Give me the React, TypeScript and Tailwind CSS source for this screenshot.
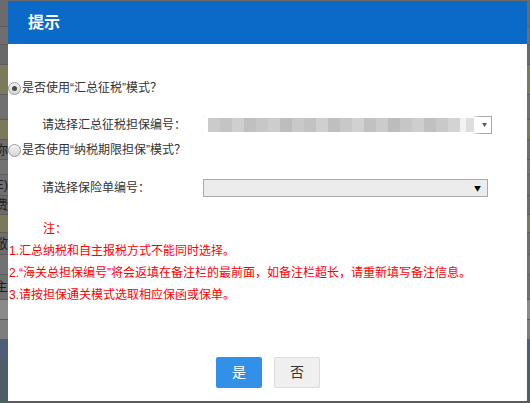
import React from "react";

const bgRows = [
  { h: 27, c: "bg-[#6b6b6b]", t: "" },
  { h: 18, c: "bg-[#6e6e6e]", t: "" },
  { h: 20, c: "bg-[#696969]", t: "" },
  { h: 30, c: "bg-[#7b7b5c]", t: "" },
  { h: 25, c: "bg-[#707070]", t: "" },
  { h: 20, c: "bg-[#7a7a5a]", t: "" },
  { h: 20, c: "bg-[#6d6d6d]", t: "你" },
  { h: 15, c: "bg-[#737373]", t: "" },
  { h: 21, c: "bg-[#6f6f6f]", t: "E)" },
  { h: 19, c: "bg-[#6c6c6c]", t: "费" },
  { h: 18, c: "bg-[#7a7a5b]", t: "" },
  { h: 22, c: "bg-[#6e6e6e]", t: "敞" },
  { h: 20, c: "bg-[#727272]", t: "" },
  { h: 25, c: "bg-[#6f6f6f]", t: "主" },
  { h: 20, c: "bg-[#8a8a8a]", t: "" },
  { h: 20, c: "bg-[#7d7d7d]", t: "" },
  { h: 20, c: "bg-[#4d5f78]", t: "" },
  { h: 43, c: "bg-[#4a6066]", t: "" },
];

const mosaic = [
  "#cbcbcb", "#c4c4c4", "#cfcfcf", "#c0c0c0", "#c7c7c7", "#cdcdcd", "#bdbdbd",
  "#c9c9c9", "#c2c2c2", "#cfcfcf", "#bfbfbf", "#c8c8c8", "#d1d1d1", "#c1c1c1",
  "#cbcbcb", "#bcbcbc", "#c6c6c6", "#cecece", "#c0c0c0", "#c9c9c9", "#d3d3d3",
];

function Radio({ checked }: { checked?: boolean }) {
  return (
    <span className="w-[13px] h-[13px] rounded-full border border-[#9a9a9a] bg-gradient-to-b from-[#f4f4f4] to-[#d6d6d6] flex items-center justify-center shrink-0">
      {checked && <span className="w-[5px] h-[5px] rounded-full bg-[#4a4a4a]" />}
    </span>
  );
}

export default function App() {
  const notes = [
    "1.汇总纳税和自主报税方式不能同时选择。",
    "2.“海关总担保编号”将会返填在备注栏的最前面，如备注栏超长，请重新填写备注信息。",
    "3.请按担保通关模式选取相应保函或保单。",
  ];

  return (
    <div
      className="relative w-[530px] h-[403px] overflow-hidden bg-[#6b6b6b]"
      style={{ fontFamily: '"Liberation Sans", "Noto Sans CJK SC", sans-serif' }}
    >
      {/* page behind the mask */}
      <div className="flex flex-col">
        {bgRows.map((r, i) => (
          <div
            key={i}
            className={`${r.c} border-b border-[#5c5c5c] flex items-center`}
            style={{ height: r.h }}
          >
            <div className="w-[8px] overflow-hidden flex justify-end">
              <span className="whitespace-nowrap text-[13px] text-[#1e1e1e]">{r.t}</span>
            </div>
          </div>
        ))}
      </div>

      {/* dialog */}
      <div className="absolute left-[8px] top-[1px] w-[519px] h-[400px] bg-white flex flex-col">
        <div className="h-[43px] bg-[#0b6ac8] flex items-center pl-[20px]">
          <span className="text-white text-[16px] font-bold">提示</span>
        </div>

        <div className="flex-1 flex flex-col text-[12px] text-[#333]">
          <div className="mt-[34px] h-[20px] flex items-center gap-[1px]">
            <Radio checked />
            <span>是否使用“汇总征税”模式？</span>
          </div>

          <div className="mt-[18px] h-[18px] flex items-center">
            <span className="pl-[34px] w-[194px]">请选择汇总征税担保编号：</span>
            <div className="relative w-[290px] h-[18px] border border-[#a9a9a9] bg-white">
              <span className="absolute right-[4px] top-[3px] text-[5px] text-[#555] font-['Noto_Sans_CJK_SC']">▼</span>
              <div className="absolute left-[-6px] top-[-7px] w-[282px] h-[30px] rounded-full bg-white blur-[2px]" />
              <div className="absolute left-[5px] top-[1px] h-[14px] flex blur-[0.6px]">
                {mosaic.map((c, i) => (
                  <div key={i} className="w-[12px] h-[14px]" style={{ backgroundColor: c }} />
                ))}
                <div className="w-[6px] h-[14px] bg-[#f2f2f2]" />
                <div className="w-[8px] h-[14px] bg-[#dedede]" />
              </div>
            </div>
          </div>

          <div className="mt-[6px] h-[20px] flex items-center gap-[1px]">
            <Radio />
            <span>是否使用“纳税期限担保”模式？</span>
          </div>

          <div className="mt-[19px] h-[18px] flex items-center">
            <span className="pl-[34px] w-[195px]">请选择保险单编号：</span>
            <div className="w-[285px] h-[18px] border border-[#a9a9a9] bg-[#ececec] flex items-center justify-end pr-[6px]">
              <span className="text-[7px] text-black font-['Noto_Sans_CJK_SC']">▼</span>
            </div>
          </div>

          <div className="mt-[22px] h-[20px] flex items-center pl-[35px] text-[#ff0000]">注：</div>

          <div className="mt-[1px] flex flex-col text-[#ff0000] pl-[1px]">
            {notes.map((n) => (
              <div key={n} className="h-[22px] flex items-center whitespace-nowrap">
                {n}
              </div>
            ))}
          </div>

          <div className="mt-auto mb-[13px] flex justify-center gap-[12px] pl-[1px]">
            <button className="w-[46px] h-[31px] rounded-[2px] bg-[#3290e8] text-white text-[14px]">是</button>
            <button className="w-[46px] h-[31px] rounded-[2px] bg-[#efefef] border border-[#dcdcdc] text-[#333] text-[14px]">否</button>
          </div>
        </div>
      </div>
    </div>
  );
}
